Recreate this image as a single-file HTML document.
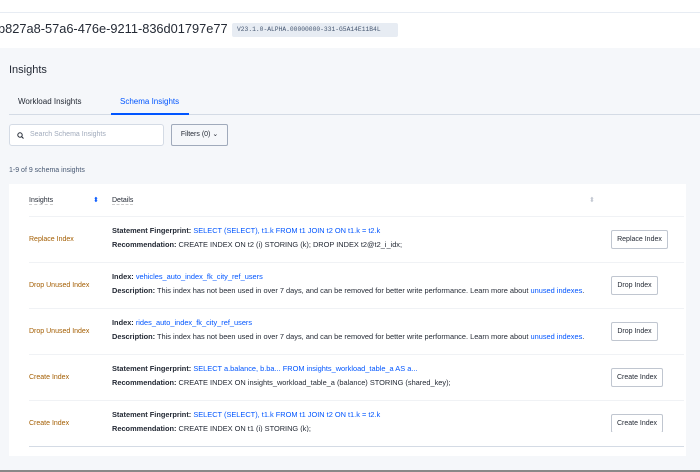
<!DOCTYPE html>
<html><head><style>
*{box-sizing:border-box;margin:0;padding:0}
body{width:700px;height:472px;overflow:hidden;background:#f5f7fa;font-family:"Liberation Sans",sans-serif;color:#242a35;position:relative}
.top{position:absolute;left:0;top:0;width:700px;height:48px;background:#fff}
.top .ln{position:absolute;left:0;top:12px;width:700px;height:1px;background:#e7ecf3}
.title{position:absolute;left:-2px;top:21px;font-size:12.8px;color:#242a35;white-space:nowrap}
.ver{position:absolute;left:232px;top:23px;height:14px;width:166px;background:#e7ecf3;border-radius:2px;font-family:"Liberation Mono",monospace;font-size:6.3px;color:#475872;line-height:14px;padding-left:5px;white-space:nowrap;overflow:hidden}
.h{position:absolute;left:9px;top:64px;font-size:11px;color:#242a35}
.tab{position:absolute;top:97px;font-size:8px}
.tabline{position:absolute;left:9px;top:114px;width:691px;height:1px;background:#d4dbe5}
.ul{position:absolute;left:111px;top:113px;width:78px;height:2px;background:#0055ff}
.search{position:absolute;left:9px;top:124px;width:155px;height:22px;background:#fff;border:1px solid #d4dbe5;border-radius:3px;font-size:7px;color:#a0aabb;line-height:20px;padding-left:20px}
.filt{position:absolute;left:171px;top:124px;width:57px;height:22px;background:#f5f7fa;border:1px solid #a0aabb;border-radius:2px;font-size:7px;line-height:20px;text-align:center;color:#242a35}
.cnt{position:absolute;left:9px;top:167px;font-size:7px;color:#475872}
.card{position:absolute;left:9px;top:184px;width:677px;height:272px;background:#fff}
.row{position:absolute;left:20px;width:655px;border-top:1px solid #f0f2f5}
.ins{position:absolute;left:0;font-size:7px;color:#a35d00}
.d{position:absolute;left:83px;font-size:7.4px;color:#242a35;white-space:nowrap}
.d b{font-weight:bold;color:#242a35}
.bl{color:#0055ff}
.btn{position:absolute;height:19px;border:1px solid #c0c6d0;border-radius:2px;font-size:7px;line-height:17px;text-align:center;background:#fff}
.bot{position:absolute;left:0;top:470px;width:700px;height:2px;background:#888}
</style></head><body>
<div class="top"><div class="ln"></div>
<div class="title">b827a8-57a6-476e-9211-836d01797e77</div>
<div class="ver">V23.1.0-ALPHA.00000000-331-G5A14E11B4L</div></div>
<div class="h">Insights</div>
<div class="tab" style="left:18px;color:#242a35">Workload Insights</div>
<div class="tab" style="left:120px;color:#0055ff">Schema Insights</div>
<div class="tabline"></div><div class="ul"></div>
<div class="search"><svg style="position:absolute;left:7px;top:7px" width="7" height="7" viewBox="0 0 7 7"><circle cx="3" cy="3" r="2.2" fill="none" stroke="#242a35" stroke-width="1"/><path d="M4.6 4.6L6.5 6.5" stroke="#242a35"/></svg>Search Schema Insights</div>
<div class="filt">Filters (0) ⌄</div>
<div class="cnt">1-9 of 9 schema insights</div>
<div class="card">
<div style="position:absolute;left:20px;top:13px;font-size:7px;border-bottom:1px dashed #ccc">Insights</div>
<div style="position:absolute;left:84px;top:12px;font-size:7px;color:#0055ff">⬍</div>
<div style="position:absolute;left:103px;top:13px;font-size:7px;border-bottom:1px dashed #ccc">Details</div>
<div style="position:absolute;left:580px;top:12px;font-size:7px;color:#c0c6d0">⬍</div>

<div class="row" style="top:32px;height:46px"><div class="ins" style="top:19px">Replace Index</div>
<div class="d" style="top:9px"><b>Statement Fingerprint:</b> <span class="bl">SELECT (SELECT), t1.k FROM t1 JOIN t2 ON t1.k = t2.k</span></div>
<div class="d" style="top:23px"><b>Recommendation:</b> CREATE INDEX ON t2 (i) STORING (k); DROP INDEX t2@t2_i_idx;</div>
<div class="btn" style="left:582px;top:13px;width:57px;height:19px">Replace Index</div></div>

<div class="row" style="top:78px;height:46px"><div class="ins" style="top:19px">Drop Unused Index</div>
<div class="d" style="top:9px"><b>Index:</b> <span class="bl">vehicles_auto_index_fk_city_ref_users</span></div>
<div class="d" style="top:23px"><b>Description:</b> This index has not been used in over 7 days, and can be removed for better write performance. Learn more about <span class="bl">unused indexes</span>.</div>
<div class="btn" style="left:582px;top:13px;width:47px">Drop Index</div></div>

<div class="row" style="top:124px;height:46px"><div class="ins" style="top:19px">Drop Unused Index</div>
<div class="d" style="top:9px"><b>Index:</b> <span class="bl">rides_auto_index_fk_city_ref_users</span></div>
<div class="d" style="top:23px"><b>Description:</b> This index has not been used in over 7 days, and can be removed for better write performance. Learn more about <span class="bl">unused indexes</span>.</div>
<div class="btn" style="left:582px;top:13px;width:47px">Drop Index</div></div>

<div class="row" style="top:170px;height:46px"><div class="ins" style="top:19px">Create Index</div>
<div class="d" style="top:9px"><b>Statement Fingerprint:</b> <span class="bl">SELECT a.balance, b.ba... FROM insights_workload_table_a AS a...</span></div>
<div class="d" style="top:23px"><b>Recommendation:</b> CREATE INDEX ON insights_workload_table_a (balance) STORING (shared_key);</div>
<div class="btn" style="left:582px;top:13px;width:52px">Create Index</div></div>

<div class="row" style="top:216px;height:32px;overflow:hidden"><div class="ins" style="top:19px">Create Index</div>
<div class="d" style="top:9px"><b>Statement Fingerprint:</b> <span class="bl">SELECT (SELECT), t1.k FROM t1 JOIN t2 ON t1.k = t2.k</span></div>
<div class="d" style="top:23px"><b>Recommendation:</b> CREATE INDEX ON t1 (i) STORING (k);</div>
<div class="btn" style="left:582px;top:13px;width:52px">Create Index</div></div>
<div style="position:absolute;left:20px;top:262px;width:655px;height:1px;background:#d4dbe5"></div>
</div>
<div class="bot"></div>
</body></html>
